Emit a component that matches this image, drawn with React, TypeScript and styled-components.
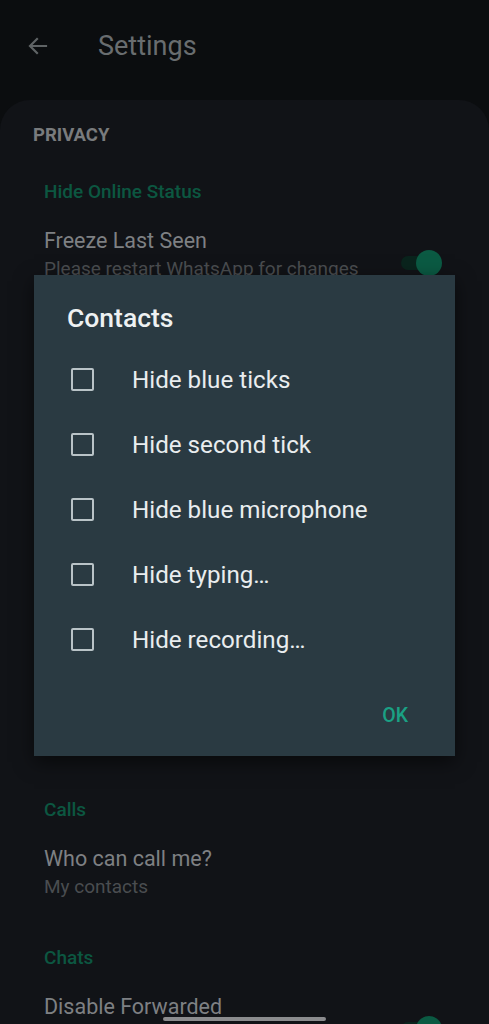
import { createGlobalStyle, styled } from "styled-components";

const GlobalStyle = createGlobalStyle`
  html, body {
    margin: 0;
    padding: 0;
    background: #0b0d0f;
  }
  * {
    box-sizing: border-box;
  }
`;

const Screen = styled.div`
  position: relative;
  width: 489px;
  height: 1024px;
  overflow: hidden;
  background: #0b0d0f;
  font-family: Roboto, "Noto Sans", "Liberation Sans", sans-serif;
`;

const TopBar = styled.header`
  display: flex;
  align-items: center;
  height: 100px;
  padding: 0 0 8px 26px;
  gap: 46px;
`;

const BackButton = styled.div`
  display: flex;
  align-items: center;
  width: 26px;
  height: 26px;
`;

const Title = styled.h1`
  margin: 0;
  font-size: 27px;
  font-weight: 400;
  color: #696d6f;
`;

const Panel = styled.main`
  background: #111317;
  border-radius: 30px 30px 0 0;
  padding-top: 25px;
  min-height: 924px;
`;

const Heading = styled.div`
  padding-left: 33px;
  margin-bottom: 18px;
  font-size: 18.5px;
  line-height: 20px;
  font-weight: 700;
  color: #797b7d;
`;

const Category = styled.div`
  height: 50px;
  padding: 17px 0 0 44px;
  font-size: 19px;
  line-height: 24px;
  font-weight: 500;
  color: #0c5741;
`;

const Item = styled.div`
  display: flex;
  align-items: flex-start;
  height: 98px;
  padding: 15px 48px 0 44px;
`;

const ItemText = styled.div`
  flex: 1;
  display: flex;
  flex-direction: column;
  gap: 4px;
`;

const ItemTitle = styled.div`
  font-size: 21.5px;
  line-height: 26px;
  color: #7e8083;
  white-space: nowrap;
`;

const ItemSummary = styled.div`
  font-size: 19px;
  line-height: 22px;
  color: #4a4d50;
  white-space: nowrap;
`;

/* the rows hidden behind the dialog */
const Covered = styled.div`
  height: 470px;
`;

const Toggle = styled.div`
  position: relative;
  flex-shrink: 0;
  width: 40px;
  height: 14px;
  margin-top: 28px;
  border-radius: 7px;
  background: #0a241d;
`;

const Thumb = styled.div`
  position: absolute;
  right: -1px;
  top: -6px;
  width: 26px;
  height: 26px;
  border-radius: 50%;
  background: #0b5a43;
`;

const Dialog = styled.div`
  position: absolute;
  left: 34px;
  top: 275px;
  width: 421px;
  height: 481px;
  background: #2a3a42;
  box-shadow: 0 6px 18px rgba(0, 0, 0, 0.55);
  padding: 27px 0 28px 0;
  display: flex;
  flex-direction: column;
`;

const DialogTitle = styled.div`
  padding-left: 33px;
  font-size: 26.5px;
  line-height: 32px;
  font-weight: 500;
  color: #eef1f2;
  margin-bottom: 13px;
`;

const Option = styled.label`
  display: flex;
  align-items: center;
  height: 65px;
  padding-left: 37px;
  gap: 38px;
  font-size: 24.2px;
  color: #e9edef;
`;

const Box = styled.span`
  width: 23px;
  height: 23px;
  border: 2px solid #b9c3c7;
  border-radius: 2px;
  flex-shrink: 0;
`;

const Actions = styled.div`
  display: flex;
  justify-content: flex-end;
  margin-top: auto;
  padding-right: 47px;
`;

const OkButton = styled.button`
  border: 0;
  background: none;
  padding: 0;
  font-family: inherit;
  font-size: 19.5px;
  line-height: 24px;
  font-weight: 500;
  color: #1aa184;
`;

const HomeIndicator = styled.div`
  position: absolute;
  left: 163px;
  bottom: 3px;
  width: 163px;
  height: 4px;
  border-radius: 2px;
  background: #8b8c8e;
`;

const options = [
  "Hide blue ticks",
  "Hide second tick",
  "Hide blue microphone",
  "Hide typing…",
  "Hide recording…",
];

const App = () => {
  return (
    <Screen>
      <GlobalStyle />
      <TopBar>
        <BackButton>
          <svg width="24" height="24" viewBox="0 0 24 24" fill="none">
            <path d="M20 12H5M11 5l-7 7 7 7" stroke="#5f6365" strokeWidth="2.2" strokeLinecap="square" />
          </svg>
        </BackButton>
        <Title>Settings</Title>
      </TopBar>
      <Panel>
        <Heading>PRIVACY</Heading>
        <Category>Hide Online Status</Category>
        <Item>
          <ItemText>
            <ItemTitle>Freeze Last Seen</ItemTitle>
            <ItemSummary>Please restart WhatsApp for changes</ItemSummary>
          </ItemText>
          <Toggle>
            <Thumb />
          </Toggle>
        </Item>
        <Covered />
        <Category>Calls</Category>
        <Item>
          <ItemText>
            <ItemTitle>Who can call me?</ItemTitle>
            <ItemSummary>My contacts</ItemSummary>
          </ItemText>
        </Item>
        <Category>Chats</Category>
        <Item>
          <ItemText>
            <ItemTitle>Disable Forwarded</ItemTitle>
          </ItemText>
          <Toggle>
            <Thumb />
          </Toggle>
        </Item>
      </Panel>

      <Dialog>
        <DialogTitle>Contacts</DialogTitle>
        {options.map((o) => (
          <Option key={o}>
            <Box />
            {o}
          </Option>
        ))}
        <Actions>
          <OkButton>OK</OkButton>
        </Actions>
      </Dialog>
      <HomeIndicator />
    </Screen>
  );
};

export default App;
